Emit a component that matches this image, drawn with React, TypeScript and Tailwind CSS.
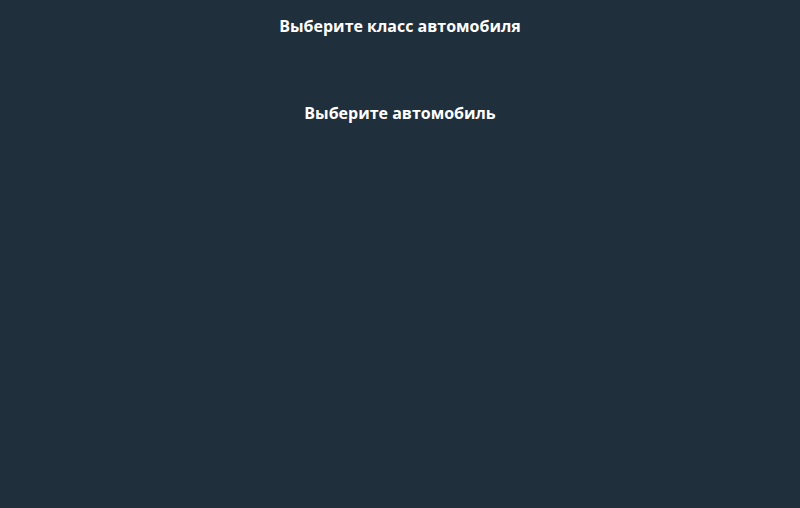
import React from "react";

const App: React.FC = () => {
    return (
        <div
            className="min-h-screen w-full bg-[#1f2f3b] flex flex-col items-center text-white"
            style={{ fontFamily: '"Open Sans", sans-serif' }}
        >
            <h2 className="mt-[14px] text-base font-bold leading-6">Выберите класс автомобиля</h2>
            <div className="h-[63px]" />
            <h2 className="text-base font-bold leading-6">Выберите автомобиль</h2>
        </div>
    );
};

export default App;
